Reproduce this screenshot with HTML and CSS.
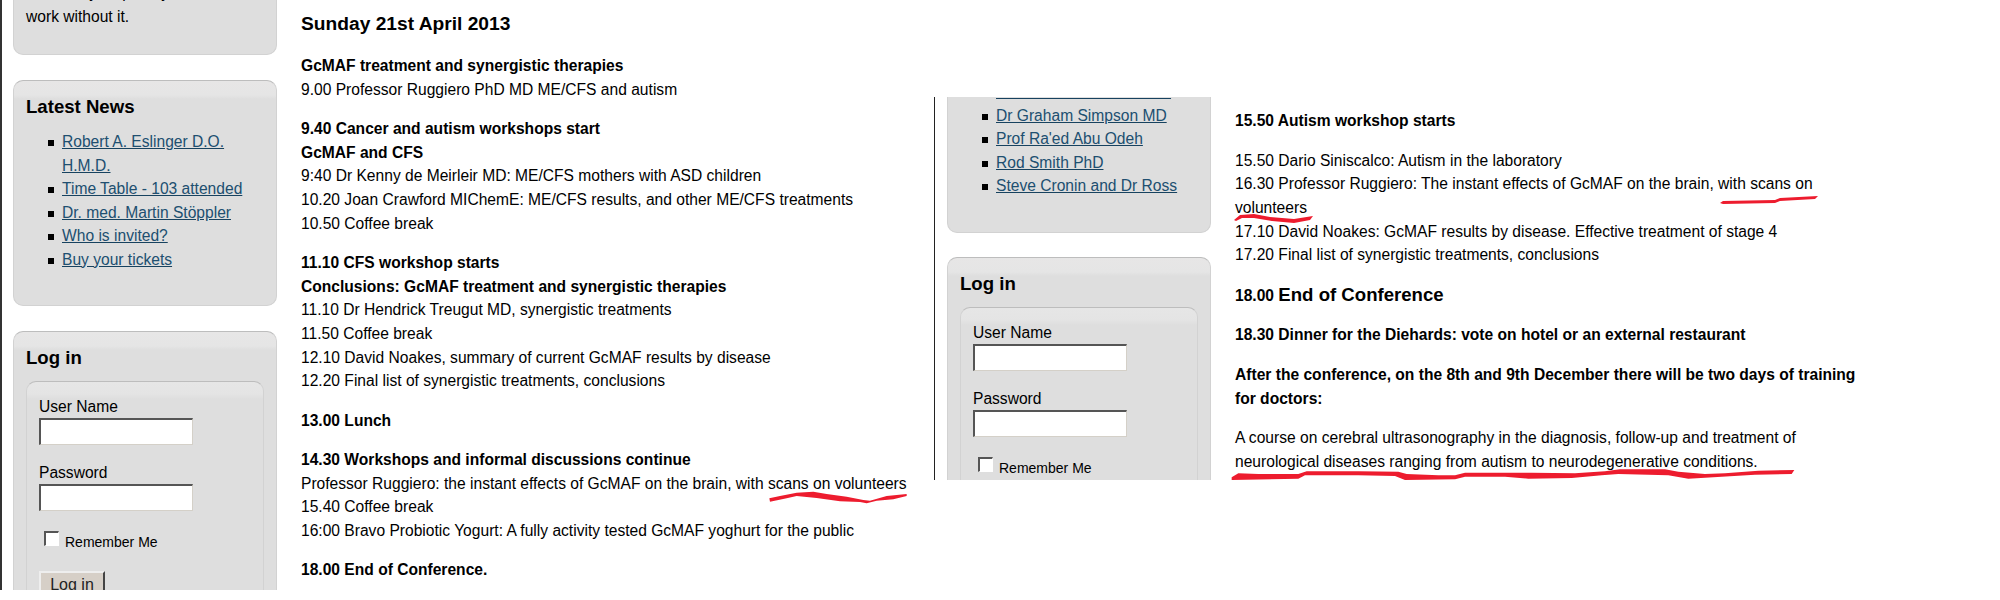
FILE: index.html
```html
<!DOCTYPE html>
<html lang="en">
<head>
<meta charset="utf-8">
<title>Conference programme</title>
<link rel="stylesheet" href="styles.css">
</head>
<body>
<div class="collage">
  <section class="shot shot-left">
    <aside class="sidebar">
      <div class="card card-clipped-top">
        <p class="card-text">Once they stop, they can't<br>work without it.</p>
      </div>
      <div class="card card-news">
        <h3 class="card-title">Latest News</h3>
        <ul class="links">
          <li><a href="#">Robert A. Eslinger D.O. H.M.D.</a></li>
          <li><a href="#">Time Table - 103 attended</a></li>
          <li><a href="#">Dr. med. Martin Stöppler</a></li>
          <li><a href="#">Who is invited?</a></li>
          <li><a href="#">Buy your tickets</a></li>
        </ul>
      </div>
      <div class="card card-login">
        <h3 class="card-title">Log in</h3>
        <form class="login">
          <label class="field">User Name<input type="text" class="input"></label>
          <label class="field">Password<input type="password" class="input"></label>
          <label class="remember"><input type="checkbox" class="check">Remember Me</label>
          <button type="button" class="btn">Log in</button>
        </form>
      </div>
    </aside>
    <main class="schedule">
      <h2 class="day">Sunday 21st April 2013</h2>
      <p><b>GcMAF treatment and synergistic therapies</b><br>9.00 Professor Ruggiero PhD MD ME/CFS and autism</p>
      <p><b>9.40 Cancer and autism workshops start</b><br><b>GcMAF and CFS</b><br>9:40 Dr Kenny de Meirleir MD: ME/CFS mothers with ASD children<br>10.20 Joan Crawford MIChemE: ME/CFS results, and other ME/CFS treatments<br>10.50 Coffee break</p>
      <p><b>11.10 CFS workshop starts</b><br><b>Conclusions: GcMAF treatment and synergistic therapies</b><br>11.10 Dr Hendrick Treugut MD, synergistic treatments<br>11.50 Coffee break<br>12.10 David Noakes, summary of current GcMAF results by disease<br>12.20 Final list of synergistic treatments, conclusions</p>
      <p><b>13.00 Lunch</b></p>
      <p><b>14.30 Workshops and informal discussions continue</b><br>Professor Ruggiero: the instant effects of GcMAF on the brain, with <span class="mark">scans on volunteers<svg class="ink ink-a" viewBox="0 0 480 120"><path d="M28 85 L60 78 L110 68 L160 65 L200 72 L260 80 L310 90 L330 92 L380 78 L440 72 L440 78 L400 88 L350 92 L320 100 L300 96 L240 94 L170 84 L110 78 L80 85 L30 95 Z"/></svg></span><br>15.40 Coffee break<br>16:00 Bravo Probiotic Yogurt: A fully activity tested GcMAF yoghurt for the public</p>
      <p><b>18.00 End of Conference.</b></p>
    </main>
  </section>
  <section class="shot shot-mid">
    <div class="card card-speakers">
      <ul class="links">
        <li><a href="#">Dr Mohammad Al-Ahmari</a></li>
        <li><a href="#">Dr Graham Simpson MD</a></li>
        <li><a href="#">Prof Ra'ed Abu Odeh</a></li>
        <li><a href="#">Rod Smith PhD</a></li>
        <li><a href="#">Steve Cronin and Dr Ross</a></li>
      </ul>
    </div>
    <div class="card card-login">
      <h3 class="card-title">Log in</h3>
      <form class="login">
        <label class="field">User Name<input type="text" class="input"></label>
        <label class="field">Password<input type="password" class="input"></label>
        <label class="remember"><input type="checkbox" class="check">Remember Me</label>
        <button type="button" class="btn">Log in</button>
      </form>
    </div>
  </section>
  <section class="shot shot-right">
    <p><b>15.50 Autism workshop starts</b></p>
    <p>15.50 Dario Siniscalco: Autism in the laboratory<br>16.30 Professor Ruggiero: The instant effects of GcMAF on the brain, <span class="mark">with scans on<svg class="ink ink-b" viewBox="0 0 98 8"><path d="M0 7 L3 5 L55 4 L60 2 L98 0 L95 3 L60 5 L55 7 L3 8 Z"/></svg></span><br><span class="mark">volunteers<svg class="ink ink-c" viewBox="0 0 79 10"><path d="M0 6 L6 1 L20 0 L36 3 L60 5 L79 2 L76 6 L60 9 L38 7 L20 4 L8 4 L2 7 Z"/></svg></span><br>17.10 David Noakes: GcMAF results by disease. Effective treatment of stage 4<br>17.20 Final list of synergistic treatments, conclusions</p>
    <p><b>18.00 <span class="big">End of Conference</span></b></p>
    <p><b>18.30 Dinner for the Diehards: vote on hotel or an external restaurant</b></p>
    <p><b>After the conference, on the 8th and 9th December there will be two days of training for doctors:</b></p>
    <p>A course on cerebral ultrasonography in the diagnosis, follow-up and treatment of<br><span class="mark">neurological diseases ranging from autism to neurodegenerative conditions.<svg class="ink ink-d" viewBox="0 0 1740 120"><path d="M20 82 L40 70 L100 72 L220 72 L245 64 L400 64 L520 65 L545 72 L640 76 L690 76 L720 68 L920 68 L1050 70 L1140 64 L1185 58 L1320 58 L1360 65 L1440 72 L1500 70 L1600 62 L1708 60 L1700 72 L1590 74 L1490 80 L1390 86 L1330 76 L1180 72 L1130 76 L1040 84 L910 86 L840 80 L720 80 L690 88 L540 90 L510 78 L400 76 L240 76 L220 86 L20 90 Z"/></svg></span></p>
  </section>
</div>
</body>
</html>
```
FILE: styles.css
```css
* { box-sizing: border-box; }
html, body { margin: 0; padding: 0; background: #fff; }
body { font-family: "Liberation Sans", Arial, sans-serif; font-size: 15.6px; line-height: 23.7px; color: #000; }
.collage { display: flex; width: 2000px; height: 600px; overflow: hidden; align-items: flex-start; }
.shot-left { display: flex; flex: none; width: 934px; height: 590px; overflow: hidden; border-left: 2px solid #333; }
.sidebar { flex: none; width: 264px; margin-left: 11px; display: flex; flex-direction: column; gap: 25px; }
.card { border: 1px solid #d2d2d2; border-top-color: #bdbdbd; border-radius: 10px; padding: 0 12px; background: linear-gradient(#e7e6e6 0, #e5e5e5 14px, #dedede 18px) #dedede; }
.card-clipped-top { height: 55px; flex: none; border-top: 0; border-radius: 0 0 10px 10px; background: #dedede; overflow: hidden; }
.card-text { margin: -19px 0 0; white-space: nowrap; }
.card-title { margin: 0; font-size: 18.6px; line-height: 24px; font-weight: bold; padding-top: 14px; }
.card-news { height: 226px; flex: none; }
.links { list-style: none; margin: 11px 0 0; padding: 0 0 0 36px; line-height: 23.5px; }
.links li { position: relative; }
.links li::before { content: ""; position: absolute; left: -14px; top: 10px; width: 6px; height: 6px; background: #000; }
.links a { color: #204f70; text-decoration: underline; text-decoration-color: #17425f; }
.login { margin-top: 11px; border: 1px solid #d2d2d2; border-top-color: #bdbdbd; border-radius: 10px; padding: 13px 12px 0; background: linear-gradient(#e6e6e6 0, #e4e4e4 12px, #dedede 17px) #dedede; }
.card-login { flex: none; }
.field { display: block; line-height: 23px; margin-bottom: 16px; }
.input { display: block; width: 154px; height: 27px; margin: 0; border: 1px solid #d4d0c8; border-top: 2px solid #555; border-left: 2px solid #555; background: #fff; padding: 0; }
.remember { display: flex; align-items: flex-start; font-size: 14px; line-height: 20px; margin-top: 21px; margin-left: 5px; }
.check { appearance: none; flex: none; width: 15px; height: 15px; margin: -1px 6px 0 0; border: 1px solid #fff; border-top: 2px solid #555; border-left: 2px solid #555; background: #fff; }
.btn { display: block; margin-top: 19px; width: 66px; height: 28px; font: 16px "Liberation Sans", Arial, sans-serif; color: #222; background: #d6cfc7; border: 2px solid; border-color: #eee #444 #444 #eee; padding: 0; }
.schedule { flex: none; margin-left: 24px; width: 633px; padding-top: 13px; }
.schedule p { margin: 0 0 15.5px; }
.shot-right p { margin: 0 0 15.8px; }
.day { margin: 0 0 20px; font-size: 19.2px; line-height: 21px; font-weight: bold; }
.shot-mid { flex: none; width: 277px; height: 383px; margin-top: 97px; overflow: hidden; border-left: 1px solid #222; display: flex; flex-direction: column; gap: 24px; padding-left: 12px; }
.card-speakers { flex: none; height: 136px; border-top: 0; border-radius: 0 0 10px 10px; background: #dedede; overflow: hidden; }
.card-speakers .links { margin-top: -17px; }
.shot-right { flex: none; width: 630px; margin-left: 24px; margin-top: 109px; }
.big { font-size: 18.6px; }
.mark { position: relative; white-space: nowrap; }
.ink { position: absolute; fill: #ed1c2e; pointer-events: none; }
.ink-a { left: -8px; top: -5px; width: 160px; height: 40px; }
.ink-b { left: 2px; top: 21px; width: 98px; height: 8px; }
.ink-c { left: -1px; top: 15px; width: 79px; height: 10px; }
.ink-d { left: -10px; top: -3px; width: 580px; height: 40px; }
```
